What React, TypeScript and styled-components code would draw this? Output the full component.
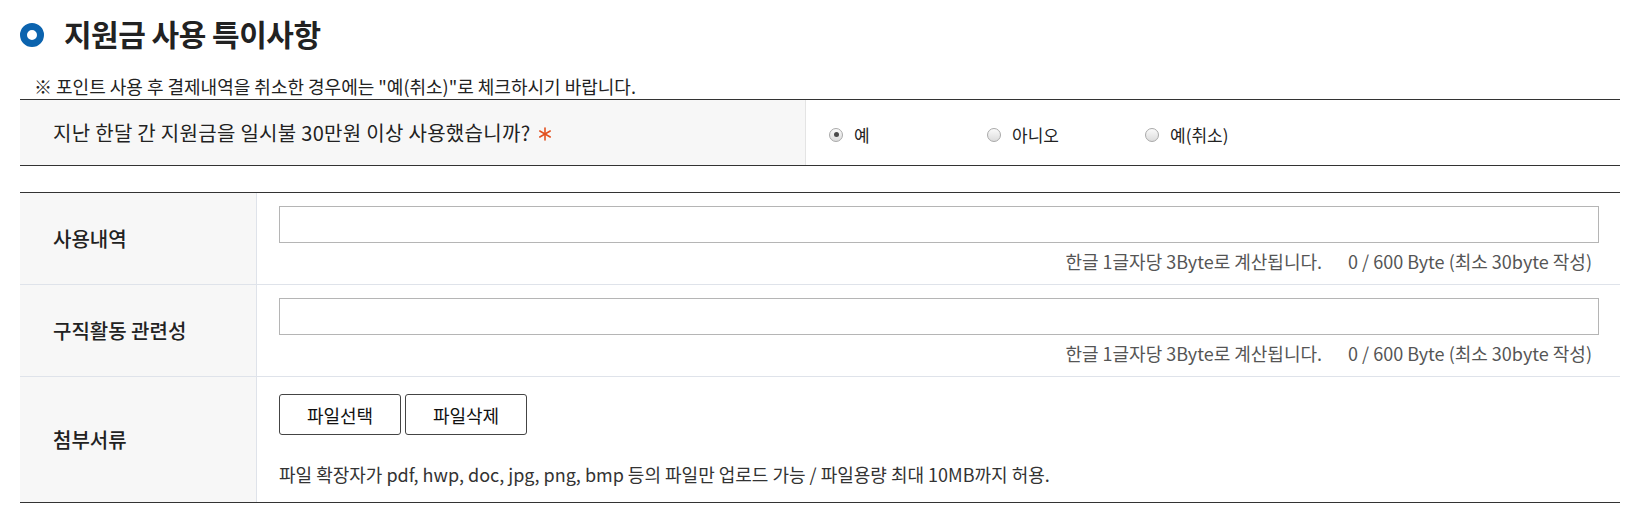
import styled, { createGlobalStyle } from 'styled-components';

const FONT = '"Noto Sans CJK KR", "Noto Sans", sans-serif';
const DARK_LINE = '#333333';
const SOFT_LINE = '#dfe3ea';
const LABEL_BG = '#f7f7f7';

const GlobalStyle = createGlobalStyle`
  html, body {
    margin: 0;
    padding: 0;
    background: #ffffff;
  }
  body {
    font-family: ${FONT};
    color: #222222;
  }
`;

const Page = styled.div`
  width: 1600px;
  padding: 0 31px 0 20px;
`;

const TitleBar = styled.div`
  display: flex;
  align-items: center;
  gap: 20px;
  height: 66px;
`;

const TitleMark = styled.span`
  box-sizing: border-box;
  width: 24px;
  height: 24px;
  margin-top: 3px;
  border: 7px solid #0b63ae;
  border-radius: 50%;
`;

const Title = styled.h2`
  margin: 0;
  font-size: 30px;
  font-weight: 700;
  letter-spacing: -0.5px;
  color: #222222;
`;

const Notice = styled.p`
  margin: 0;
  padding: 7px 0 0 14px;
  font-size: 18px;
  line-height: 26px;
  color: #222222;
`;

const QuestionTable = styled.div`
  display: flex;
  border-top: 1px solid ${DARK_LINE};
  border-bottom: 1px solid ${DARK_LINE};
  height: 65px;
`;

const QuestionCell = styled.div`
  display: flex;
  align-items: center;
  width: 752px;
  padding-left: 33px;
  background: ${LABEL_BG};
  border-right: 1px solid #e4e4e4;
  font-size: 20px;
  letter-spacing: 0.3px;
`;

const Required = styled.svg`
  width: 14px;
  height: 14px;
  margin-left: 8px;
  margin-top: 3px;
`;

const RadioGroup = styled.div`
  display: flex;
  align-items: center;
  padding: 4px 0 0 23px;
`;

const RadioOption = styled.label`
  display: flex;
  align-items: center;
  gap: 11px;
  width: 158px;
  font-size: 17px;
  color: #222222;
`;

const RadioDot = styled.span<{ $checked?: boolean }>`
  box-sizing: border-box;
  position: relative;
  width: 14px;
  height: 14px;
  border: 1px solid #a9a9a9;
  border-radius: 50%;
  background: linear-gradient(#fafafa, #dcdcdc);

  &::after {
    content: '';
    display: ${(p) => (p.$checked ? 'block' : 'none')};
    position: absolute;
    left: 3.5px;
    top: 3.5px;
    width: 5px;
    height: 5px;
    border-radius: 50%;
    background: #4a4a4a;
  }
`;

const FormTable = styled.div`
  margin-top: 26px;
  border-top: 1px solid ${DARK_LINE};
  border-bottom: 1px solid ${DARK_LINE};
`;

const FormRow = styled.div`
  display: grid;
  grid-template-columns: 237px 1fr;
  & + & {
    border-top: 1px solid ${SOFT_LINE};
  }
`;

const RowLabel = styled.div`
  display: flex;
  align-items: center;
  padding-left: 33px;
  background: ${LABEL_BG};
  border-right: 1px solid ${SOFT_LINE};
  font-size: 20px;
  font-weight: 500;
  color: #222222;
`;

const RowBody = styled.div<{ $top: number; $bottom: number }>`
  display: flex;
  flex-direction: column;
  padding: ${(p) => p.$top}px 21px ${(p) => p.$bottom}px 22px;
`;

const TextInput = styled.input`
  box-sizing: border-box;
  width: 100%;
  height: 37px;
  margin: 0;
  border: 1px solid #b5b5b5;
  background: #ffffff;
  font-family: ${FONT};
  font-size: 16px;
  padding: 0 10px;
  outline: none;
`;

const ByteHint = styled.div`
  margin-top: 6px;
  padding-right: 7px;
  text-align: right;
  font-size: 18px;
  line-height: 24px;
  color: #555555;

  span {
    margin-left: 26px;
  }
`;

const ButtonRow = styled.div`
  display: flex;
  gap: 4px;
`;

const FileButton = styled.button`
  width: 122px;
  height: 41px;
  border: 1px solid #444444;
  border-radius: 3px;
  background: #ffffff;
  font-family: ${FONT};
  font-size: 18px;
  font-weight: 400;
  color: #111111;
  cursor: pointer;
`;

const FileHint = styled.div`
  margin-top: 27px;
  font-size: 18px;
  line-height: 24px;
  color: #333333;
`;

const radioOptions = [
  { label: '예', checked: true },
  { label: '아니오', checked: false },
  { label: '예(취소)', checked: false },
];

const textRows = ['사용내역', '구직활동 관련성'];

export default function App() {
  return (
    <Page>
      <GlobalStyle />
      <TitleBar>
        <TitleMark />
        <Title>지원금 사용 특이사항</Title>
      </TitleBar>
      <Notice>※ 포인트 사용 후 결제내역을 취소한 경우에는 "예(취소)"로 체크하시기 바랍니다.</Notice>

      <QuestionTable>
        <QuestionCell>
          지난 한달 간 지원금을 일시불 30만원 이상 사용했습니까?
          <Required viewBox='0 0 14 14'>
            <g stroke='#e2501f' strokeWidth='1.6' strokeLinecap='round'>
              <line x1='7' y1='1' x2='7' y2='13' />
              <line x1='1.8' y1='4' x2='12.2' y2='10' />
              <line x1='1.8' y1='10' x2='12.2' y2='4' />
            </g>
          </Required>
        </QuestionCell>
        <RadioGroup>
          {radioOptions.map((opt) => (
            <RadioOption key={opt.label}>
              <RadioDot $checked={opt.checked} />
              {opt.label}
            </RadioOption>
          ))}
        </RadioGroup>
      </QuestionTable>

      <FormTable>
        {textRows.map((label) => (
          <FormRow key={label}>
            <RowLabel>{label}</RowLabel>
            <RowBody $top={13} $bottom={11}>
              <TextInput type='text' />
              <ByteHint>
                한글 1글자당 3Byte로 계산됩니다.
                <span>0 / 600 Byte (최소 30byte 작성)</span>
              </ByteHint>
            </RowBody>
          </FormRow>
        ))}
        <FormRow>
          <RowLabel>첨부서류</RowLabel>
          <RowBody $top={17} $bottom={16}>
            <ButtonRow>
              <FileButton type='button'>파일선택</FileButton>
              <FileButton type='button'>파일삭제</FileButton>
            </ButtonRow>
            <FileHint>
              파일 확장자가 pdf, hwp, doc, jpg, png, bmp 등의 파일만 업로드 가능 / 파일용량 최대 10MB까지 허용.
            </FileHint>
          </RowBody>
        </FormRow>
      </FormTable>
    </Page>
  );
}
